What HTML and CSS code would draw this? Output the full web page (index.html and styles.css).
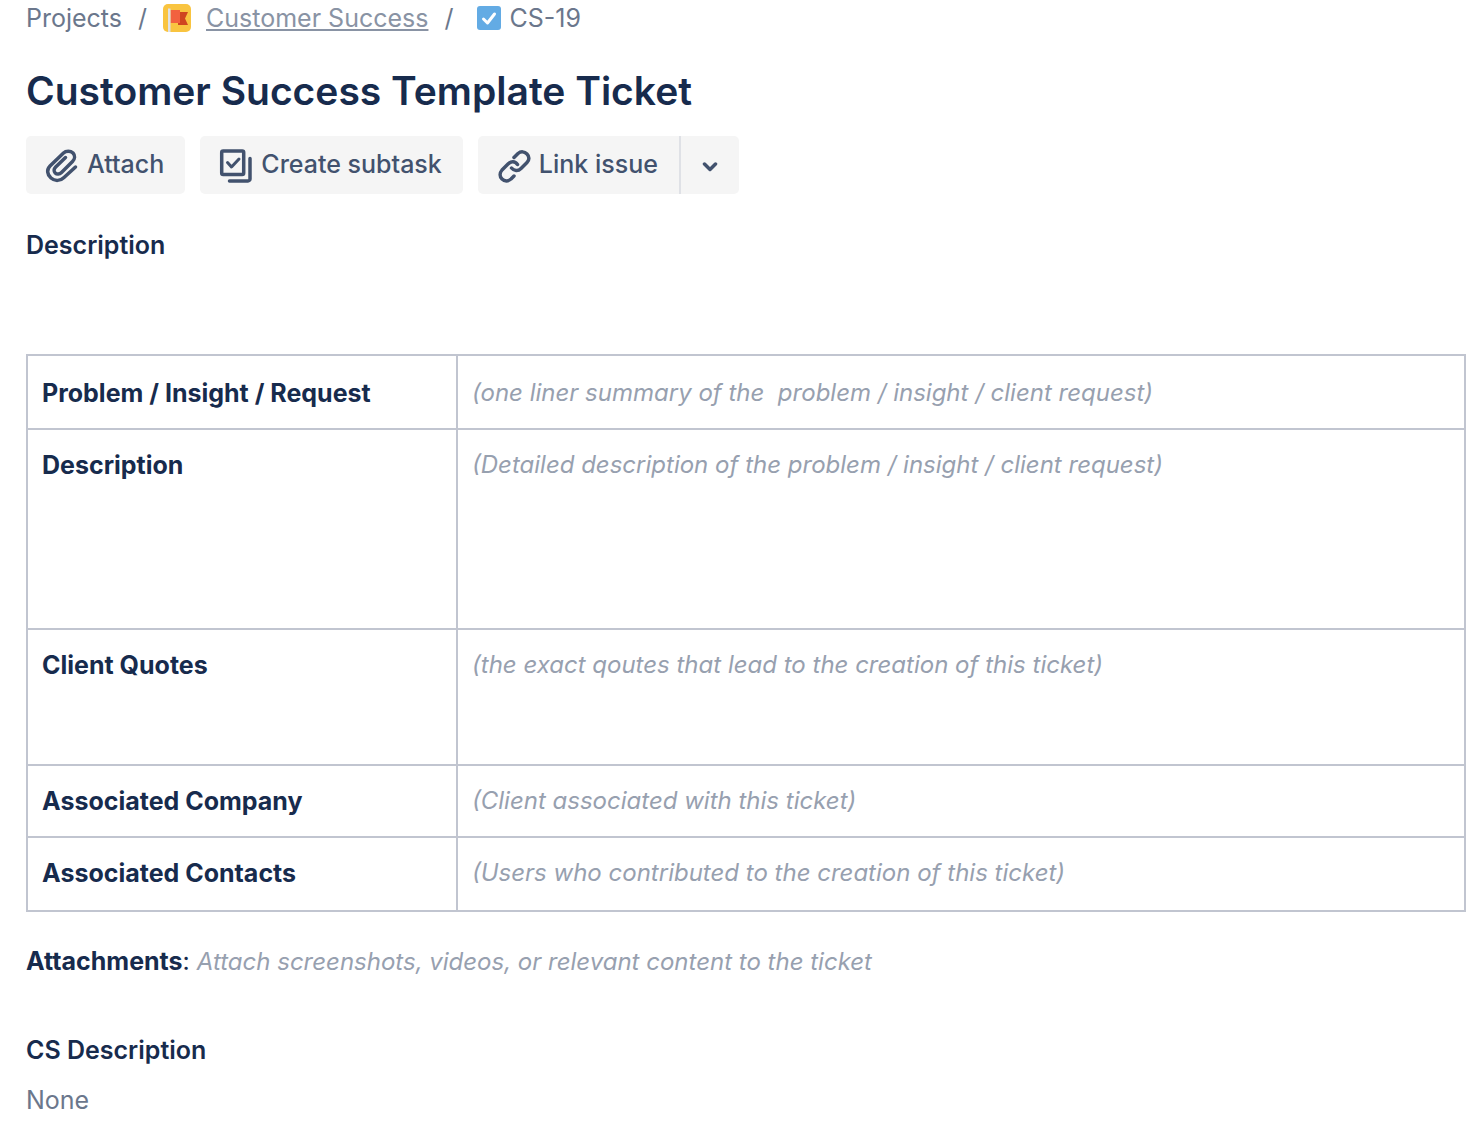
FILE: index.html
```html
<!DOCTYPE html>
<html lang="en">
  <head>
    <meta charset="utf-8" />
    <title>CS-19 Customer Success Template Ticket</title>
    <link rel="stylesheet" href="styles.css">
  </head>
  <body>
    <main class="issue">
      <nav class="breadcrumbs">
        <a href="#">Projects</a>
        <span class="slash">/</span>
        <a class="project" href="#">
          <svg class="project-icon" viewBox="0 0 28 28" width="28" height="28">
            <rect width="28" height="28" rx="5" fill="#f9c440" />
            <path d="M15 8h10l-3 6.500 3 6.500H15z" fill="#cf4520" />
            <path d="M7.500 6H17v13H7.500z" fill="#f2613f" />
            <path d="M5 4.500h2.500V28H5z" fill="#dfe1e6" />
          </svg>
          <span class="project-name">Customer Success</span>
        </a>
        <span class="slash">/</span>
        <a class="issue-key" href="#">
          <svg viewBox="0 0 24 24" width="24" height="24">
            <rect width="24" height="24" rx="3" fill="#63abe4" />
            <path d="M6.500 13l4 4 7-9" fill="none" stroke="#fff" stroke-width="3" stroke-linecap="round" stroke-linejoin="round" />
          </svg>
          <span>CS-19</span>
        </a>
      </nav>

      <h1>Customer Success Template Ticket</h1>

      <div class="toolbar">
        <button type="button" class="btn attach">
          <svg class="icon" viewBox="0 0 34 36" width="34" height="36">
            <path d="M30.500 20L19 30.500C15.500 34 10 34.500 6 31C2 27.500 1.500 22.500 5 19L18.500 6C21 3.500 25.500 3.500 28 6C30.300 8.500 30 12 27.500 14.500L16.500 25.500C14.500 27.500 11.700 27.500 10.200 26C8.700 24.500 8.700 22 10.700 20L20.500 10.500" />
          </svg>
          <span>Attach</span>
        </button>
        <button type="button" class="btn subtask">
          <svg class="icon" viewBox="0 0 34 36" width="34" height="36">
            <rect x="2.700" y="4" width="22" height="23.500" rx="1.500" />
            <path class="tick" d="M8.500 15.500l4 4.500 7.500-8" />
            <path d="M31 11.500v20.500c0 1-1 2-2 2H10.500" />
          </svg>
          <span>Create subtask</span>
        </button>
        <div class="split">
          <button type="button" class="btn link">
            <svg class="icon" viewBox="0 0 34 36" width="34" height="36">
              <path d="M17 10.500l4-4c3-2.500 6.500-2 9 .5 2.500 2.500 2.500 6 0 8.500l-6 6c-3 3-7 2.500-9.500-.5M17 29l-3 3c-3 2.500-6.500 2.500-9 0-2.500-2.500-2.500-6 0-9l6-6c3-3 7-3 9.500.5" />
            </svg>
            <span>Link issue</span>
          </button>
          <button type="button" class="btn more" aria-label="More link options">
            <svg class="icon" viewBox="0 0 16 10" width="16" height="10">
              <path d="M2.500 2l5.500 5.500L13.500 2" />
            </svg>
          </button>
        </div>
      </div>

      <h2>Description</h2>

      <table class="details">
        <tr>
          <th scope="row">Problem / Insight / Request</th>
          <td><p>(one liner summary of the&nbsp; problem / insight / client request)</p></td>
        </tr>
        <tr>
          <th scope="row">Description</th>
          <td>
            <p>(Detailed description of the problem / insight / client request)</p>
            <p></p>
            <p></p>
          </td>
        </tr>
        <tr>
          <th scope="row">Client Quotes</th>
          <td>
            <p>(the exact qoutes that lead to the creation of this ticket)</p>
            <p></p>
          </td>
        </tr>
        <tr>
          <th scope="row">Associated Company</th>
          <td><p>(Client associated with this ticket)</p></td>
        </tr>
        <tr>
          <th scope="row">Associated Contacts</th>
          <td><p>(Users who contributed to the creation of this ticket)</p></td>
        </tr>
      </table>

      <p class="attachments"><strong>Attachments</strong>: <em>Attach screenshots, videos, or relevant content to the ticket</em></p>

      <h2>CS Description</h2>
      <p class="none">None</p>
    </main>
  </body>
</html>
```
FILE: styles.css
```css
* {
  box-sizing: border-box;
}

body {
  margin: 0;
  background-color: #fff;
  font-family: Inter, "Liberation Sans", sans-serif;
  font-size: 25px;
  line-height: 40px;
  color: #172b4d;
}

h1,
h2,
p {
  margin: 0;
}

svg {
  flex: none;
}

.issue {
  padding: 0 16px 0 26px;
}

.breadcrumbs {
  display: flex;
  align-items: center;
  height: 35px;
  color: #6b778c;
}

.breadcrumbs a {
  color: inherit;
  text-decoration: none;
}

.slash {
  margin: 0 16px;
}

.project,
.issue-key {
  display: flex;
  align-items: center;
}

.project {
  gap: 15px;
}

.breadcrumbs .project-name {
  color: #8993a4;
  text-decoration: underline;
  text-decoration-thickness: 2px;
  text-underline-offset: 2px;
}

.issue-key {
  gap: 8px;
  margin-left: 8px;
}

h1 {
  margin-top: 32px;
  font-size: 39px;
  font-weight: 600;
  line-height: 48px;
}

.toolbar {
  display: flex;
  gap: 15px;
  margin-top: 21px;
}

.btn {
  display: flex;
  align-items: center;
  gap: 8px;
  height: 58px;
  padding: 0 21px 0 19px;
  border: none;
  border-radius: 5px;
  background-color: #f5f5f5;
  color: #42526e;
  font: inherit;
  font-weight: 500;
  cursor: pointer;
}

.btn span {
  padding-bottom: 2px;
}

.icon {
  fill: none;
  stroke: #42526e;
  stroke-width: 3.5;
  stroke-linecap: round;
  stroke-linejoin: round;
}

.tick {
  stroke-width: 3;
}

.split {
  display: flex;
}

.link {
  border-radius: 5px 0 0 5px;
}

.more {
  justify-content: center;
  width: 60px;
  padding: 4px 0 0;
  border-left: 2px solid #dfe1e6;
  border-radius: 0 5px 5px 0;
}

h2 {
  margin-top: 31px;
  font-size: 25px;
  font-weight: 600;
  line-height: 40px;
}

.details {
  width: 100%;
  margin-top: 89px;
  border-collapse: collapse;
  table-layout: fixed;
}

.details th,
.details td {
  padding: 15px 14px;
  border: 2px solid #c1c5d0;
  text-align: left;
  vertical-align: top;
}

.details th {
  width: 430px;
  font-weight: 700;
}

.details td {
  color: #97a0af;
  font-size: 24px;
  font-style: oblique 10deg;
}

.details p {
  min-height: 40px;
}

.details p + p {
  margin-top: 24px;
}

.details tr:first-child th,
.details tr:first-child td {
  padding-top: 17px;
}

.details tr:last-child th,
.details tr:last-child td {
  padding-bottom: 17px;
}

.attachments {
  margin-top: 29px;
}

.attachments strong {
  font-weight: 700;
}

.attachments em {
  color: #97a0af;
  font-size: 24px;
  font-style: oblique 10deg;
}

.attachments + h2 {
  margin-top: 48px;
}

.none {
  margin-top: 10px;
  color: #6b778c;
}
```
